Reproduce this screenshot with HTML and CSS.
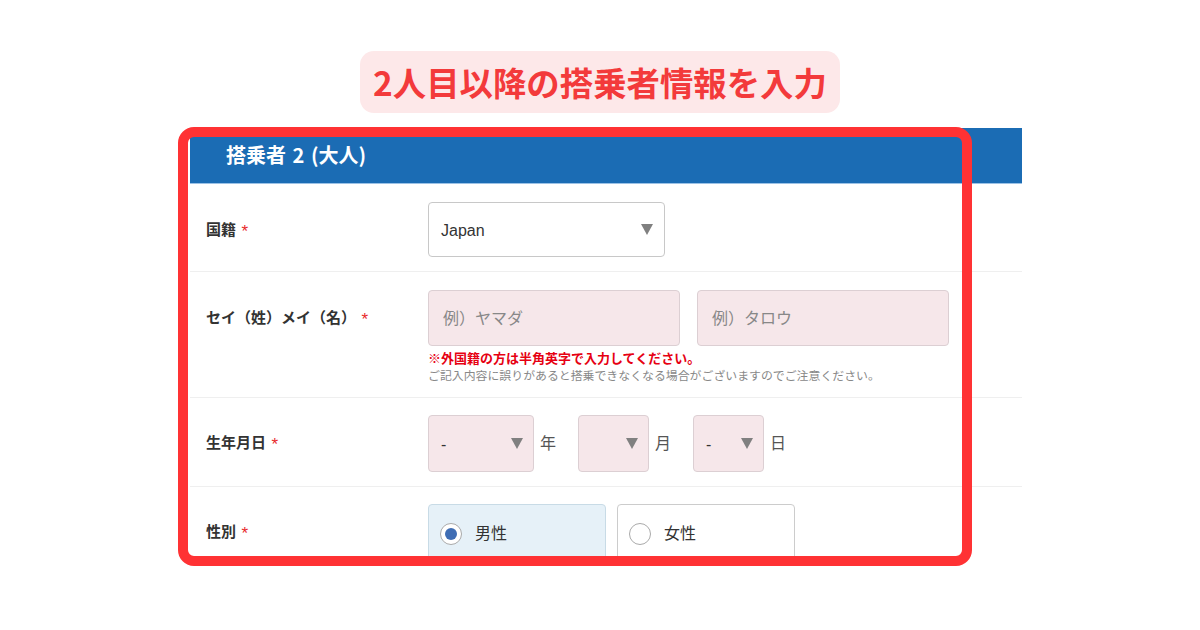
FILE: index.html
```html
<!DOCTYPE html>
<html lang="ja">
<head>
    <meta charset="UTF-8">
    <title>2人目以降の搭乗者情報を入力</title>
    <link rel="stylesheet" href="styles.css">
</head>
<body>
    <div class="page">
        <div class="heading">2人目以降の搭乗者情報を入力</div>
        <div class="frame">
            <div class="shot">
                <div class="shot-head">搭乗者 2 (大人)</div>
                <!-- 国籍 -->
                <div class="row">
                    <div class="label">国籍 <span class="req">*</span></div>
                    <div class="field">
                        <div class="select nation"><span class="val">Japan</span><i class="caret"></i></div>
                    </div>
                </div>
                <!-- 氏名 -->
                <div class="row">
                    <div class="label">セイ（姓）メイ（名） <span class="req">*</span></div>
                    <div class="field">
                        <div class="names">
                            <div class="input">例）ヤマダ</div>
                            <div class="input">例）タロウ</div>
                        </div>
                        <p class="note-red">※外国籍の方は半角英字で入力してください。</p>
                        <p class="note">ご記入内容に誤りがあると搭乗できなくなる場合がございますのでご注意ください。</p>
                    </div>
                </div>
                <!-- 生年月日 -->
                <div class="row">
                    <div class="label">生年月日 <span class="req">*</span></div>
                    <div class="field dates">
                        <div class="select pink year"><span class="val">-</span><i class="caret"></i></div>
                        <span class="unit">年</span>
                        <div class="select pink short"><span class="val"></span><i class="caret"></i></div>
                        <span class="unit">月</span>
                        <div class="select pink short"><span class="val">-</span><i class="caret"></i></div>
                        <span class="unit">日</span>
                    </div>
                </div>
                <!-- 性別 -->
                <div class="row last">
                    <div class="label">性別 <span class="req">*</span></div>
                    <div class="field radios">
                        <div class="radio checked"><i class="dot"></i><span>男性</span></div>
                        <div class="radio"><i class="dot"></i><span>女性</span></div>
                    </div>
                </div>
            </div>
            <div class="mark"></div>
        </div>
    </div>
</body>
</html>
```
FILE: styles.css
```css
body {
    margin: 0;
    background-color: #fff;
    font-family: "Noto Sans CJK JP", sans-serif;
    color: #333;
}
.page {
    width: 1200px;
    height: 630px;
    overflow: hidden;
}
.heading {
    width: 480px;
    height: 62px;
    margin: 51px auto 0;
    background-color: #fde8e9;
    border-radius: 14px;
    display: flex;
    align-items: center;
    justify-content: center;
    color: #f33a3b;
    font-size: 33.4px;
    font-weight: 700;
    line-height: 1;
}
.frame {
    position: relative;
    width: 832px;
    margin: 15px 0 0 190px;
}
.shot {
    height: 429px;
    overflow: hidden;
    background-color: #fff;
}
.shot-head {
    height: 56px;
    padding: 0 0 3px 36px;
    box-sizing: border-box;
    display: flex;
    align-items: center;
    background-color: #1b6cb4;
    border-bottom: 1px solid #9cc2e6;
    color: #fff;
    font-size: 20px;
    font-weight: 700;
    word-spacing: 2px;
}
.row {
    display: grid;
    grid-template-columns: 222px 1fr;
    padding: 18px 0 14px 16px;
    border-bottom: 1px solid #efefef;
}
.row:nth-of-type(4) {
    padding-top: 17px;
}
.row.last {
    padding-top: 17px;
    border-bottom: none;
}
.label {
    height: 52px;
    display: flex;
    align-items: center;
    font-size: 15px;
    font-weight: 700;
    color: #333;
    white-space: pre;
}
.req {
    color: #e8292c;
    font-weight: 400;
    font-size: 17px;
    line-height: 1;
    font-family: "Liberation Sans", sans-serif;
    margin: 7px 0 0 2px;
}
.select {
    height: 55px;
    box-sizing: border-box;
    border: 1px solid #c8c8c8;
    border-radius: 4px;
    background-color: #fff;
    display: flex;
    align-items: center;
    justify-content: space-between;
    padding: 0 11px 0 12px;
}
.select .val {
    font-family: "Liberation Sans", "Noto Sans CJK JP", sans-serif;
    font-size: 16px;
    color: #333;
    padding-top: 2px;
}
.nation {
    width: 237px;
}
.caret {
    width: 0;
    height: 0;
    border-left: 6px solid transparent;
    border-right: 6px solid transparent;
    border-top: 11px solid #808080;
}
.pink {
    height: 57px;
    background-color: #f6e7ea;
    border-color: #dccfd3;
    padding-right: 10px;
}
.year {
    width: 106px;
}
.short {
    width: 71px;
}
.dates {
    display: flex;
    align-items: center;
}
.unit {
    font-size: 16px;
    color: #555;
    margin: 0 22px 4px 6px;
}
.names {
    display: flex;
    gap: 17px;
}
.input {
    width: 252px;
    height: 56px;
    box-sizing: border-box;
    border: 1px solid #dccfd3;
    border-radius: 4px;
    background-color: #f6e7ea;
    display: flex;
    align-items: center;
    padding: 0 0 2px 14px;
    font-size: 16px;
    color: #888;
}
.note-red {
    margin: 4px 0 0;
    font-size: 13px;
    line-height: 16px;
    font-weight: 700;
    color: #e60012;
}
.note {
    margin: 2px 0 0;
    font-size: 11.9px;
    line-height: 14px;
    color: #888;
    padding-bottom: 1px;
}
.radios {
    display: flex;
    gap: 11px;
}
.radio {
    width: 178px;
    height: 70px;
    box-sizing: border-box;
    border: 1px solid #cccccc;
    border-radius: 4px;
    background-color: #fff;
    display: flex;
    align-items: flex-start;
    padding: 18px 0 0 11px;
    font-size: 16px;
    line-height: 16px;
    color: #333;
}
.radio span {
    margin-top: 1px;
}
.radio.checked {
    background-color: #e6f1f8;
    border-color: #c8dbe6;
}
.dot {
    width: 22px;
    height: 22px;
    box-sizing: border-box;
    border: 1.5px solid #aaa;
    border-radius: 50%;
    background-color: #fff;
    margin-right: 13px;
    display: flex;
    align-items: center;
    justify-content: center;
}
.radio.checked .dot::after {
    content: "";
    width: 12px;
    height: 12px;
    border-radius: 50%;
    background-color: #3f6db4;
}
/* 注釈の赤枠 */
.mark {
    position: absolute;
    left: -12px;
    top: -1px;
    width: 794px;
    height: 439px;
    box-sizing: border-box;
    border: 10px solid #ff3234;
    border-radius: 16px;
    pointer-events: none;
}
```
